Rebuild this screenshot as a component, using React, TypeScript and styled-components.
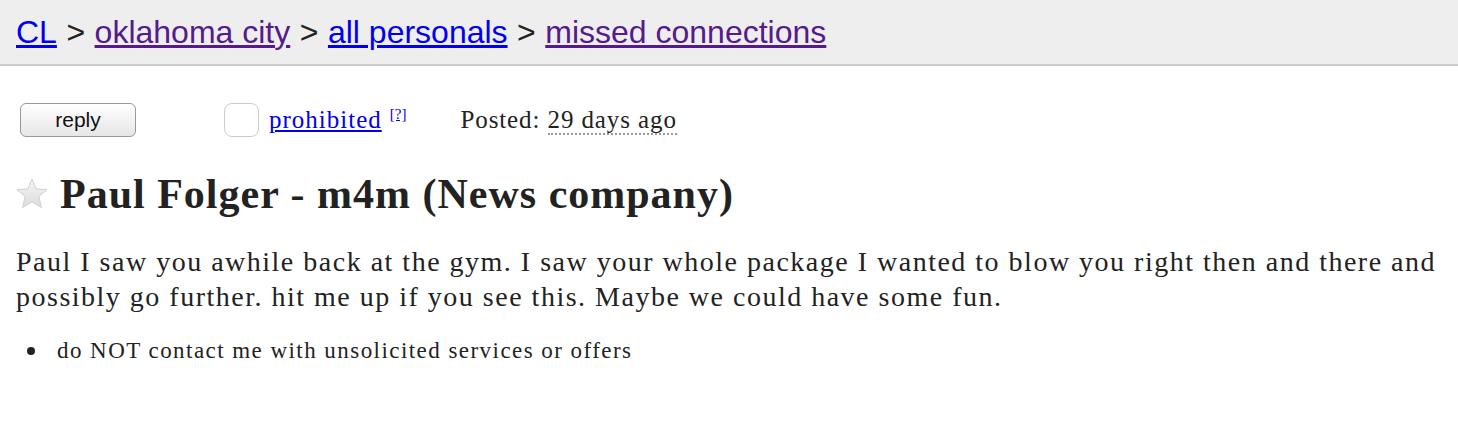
import React from 'react'
import styled, { createGlobalStyle } from 'styled-components'

const GlobalStyle = createGlobalStyle`
  body {
    margin: 0;
    background: #fff;
    font-family: "Liberation Serif", "Times New Roman", serif;
    color: #222;
  }
`

const Header = styled.header`
  height: 64px;
  background: #eee;
  border-bottom: 2px solid #ccc;
  display: flex;
  align-items: center;
  padding: 0 16px;
  font-family: "Liberation Sans", Arial, sans-serif;
  font-size: 32px;
  color: #222;
`

const Crumb = styled.a<{ $visited?: boolean }>`
  color: ${({ $visited }) => ($visited ? '#551a8b' : '#0000ee')};
  text-decoration: underline;
`

const Sep = styled.span`
  margin: 0 9.5px;
`

const Body = styled.section`
  padding: 0 16px;
`

const ActionBar = styled.div`
  display: flex;
  align-items: center;
  margin-top: 36px;
  height: 36px;
`

const ReplyButton = styled.button`
  width: 116px;
  height: 34px;
  margin-left: 4px;
  border: 1px solid #999;
  border-radius: 6px;
  background: linear-gradient(#fff, #e6e6e6);
  font-family: "Liberation Sans", Arial, sans-serif;
  font-size: 21px;
  color: #111;
  padding: 0;
`

const FlagBox = styled.span`
  width: 35px;
  height: 34px;
  margin-left: 88px;
  border: 1px solid #ccc;
  border-radius: 8px;
  box-sizing: border-box;
  background: #fff;
`

const FlagLink = styled.a`
  margin-left: 10px;
  font-size: 25px;
  letter-spacing: 1px;
  color: #0000ee;
  text-decoration: underline;
`

const Help = styled.sup`
  margin-left: 8px;
  font-size: 15px;
  color: #0000ee;
  text-decoration: underline;
  align-self: flex-start;
  margin-top: 4px;
`

const Posted = styled.span`
  margin-left: 54px;
  font-size: 25px;
  letter-spacing: 0.9px;
  color: #222;
`

const DateText = styled.time`
  border-bottom: 2px dotted #999;
`

const Title = styled.h1`
  display: flex;
  align-items: center;
  margin: 30px 0 0;
  font-size: 42px;
  letter-spacing: 1px;
  font-weight: bold;
  color: #222;
  height: 52px;
`

const Star = styled.svg`
  width: 32px;
  height: 32px;
  margin-right: 12px;
`

const PostingBody = styled.p`
  margin: 24px 0 0;
  font-size: 28px;
  letter-spacing: 1.5px;
  line-height: 35px;
  color: #222;
`

const Notices = styled.ul`
  margin: 24px 0 0;
  padding: 0;
  list-style: none;
`

const Notice = styled.li`
  display: flex;
  align-items: center;
  font-size: 23px;
  letter-spacing: 1.45px;
  color: #222;
  &::before {
    content: '';
    flex: none;
    width: 8px;
    height: 8px;
    border-radius: 50%;
    background: #222;
    margin: 0 22px 0 11px;
  }
`

export default function App() {
  return (
    <>
      <GlobalStyle />
      <Header>
        <Crumb href="#">CL</Crumb>
        <Sep>&gt;</Sep>
        <Crumb href="#" $visited>oklahoma city</Crumb>
        <Sep>&gt;</Sep>
        <Crumb href="#">all personals</Crumb>
        <Sep>&gt;</Sep>
        <Crumb href="#" $visited>missed connections</Crumb>
      </Header>
      <Body>
        <ActionBar>
          <ReplyButton>reply</ReplyButton>
          <FlagBox />
          <FlagLink href="#">prohibited</FlagLink>
          <Help>[?]</Help>
          <Posted>
            Posted: <DateText>29 days ago</DateText>
          </Posted>
        </ActionBar>
        <Title>
          <Star viewBox="0 0 32 32">
            <defs>
              <linearGradient id="starfill" x1="0" y1="0" x2="0" y2="1">
                <stop offset="0" stopColor="#f6f6f6" />
                <stop offset="1" stopColor="#dcdcdc" />
              </linearGradient>
            </defs>
            <polygon
              points="16,1 20.3,11 31,11.6 22.8,18.6 25.4,29.5 16,23.7 6.6,29.5 9.2,18.6 1,11.6 11.7,11"
              fill="url(#starfill)"
              stroke="#cfcfcf"
              strokeWidth="1"
            />
          </Star>
          Paul Folger - m4m (News company)
        </Title>
        <PostingBody>
          Paul I saw you awhile back at the gym. I saw your whole package I wanted to blow you right then and there and
          possibly go further. hit me up if you see this. Maybe we could have some fun.
        </PostingBody>
        <Notices>
          <Notice>do NOT contact me with unsolicited services or offers</Notice>
        </Notices>
      </Body>
    </>
  )
}
